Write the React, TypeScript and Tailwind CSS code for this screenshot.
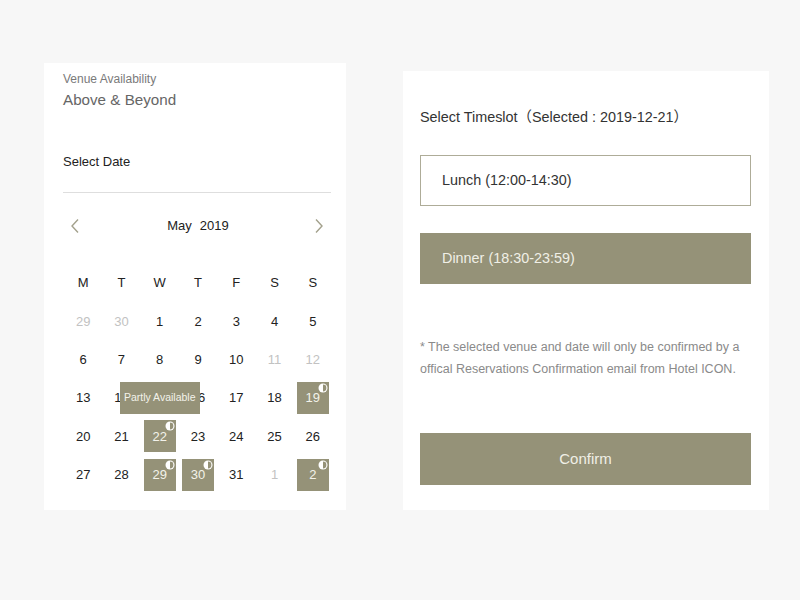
import React from 'react';

type Day = {
  n: number;
  muted?: boolean;
  partly?: boolean;
  tip?: boolean;
};

const weekdays = ['M', 'T', 'W', 'T', 'F', 'S', 'S'];

const weeks: Day[][] = [
  [{ n: 29, muted: true }, { n: 30, muted: true }, { n: 1 }, { n: 2 }, { n: 3 }, { n: 4 }, { n: 5 }],
  [{ n: 6 }, { n: 7 }, { n: 8 }, { n: 9 }, { n: 10 }, { n: 11, muted: true }, { n: 12, muted: true }],
  [{ n: 13 }, { n: 14 }, { n: 15, tip: true }, { n: 16 }, { n: 17 }, { n: 18 }, { n: 19, partly: true }],
  [{ n: 20 }, { n: 21 }, { n: 22, partly: true }, { n: 23 }, { n: 24 }, { n: 25 }, { n: 26 }],
  [{ n: 27 }, { n: 28 }, { n: 29, partly: true }, { n: 30, partly: true }, { n: 31 }, { n: 1, muted: true }, { n: 2, partly: true }],
];

function HalfMoon() {
  return (
    <svg viewBox="0 0 10 10" className="absolute top-[1px] right-[1px] w-[10px] h-[10px]">
      <circle cx="5" cy="5" r="4.5" fill="#ffffff" />
      <path d="M5 1.6 A3.4 3.4 0 0 1 5 8.4 Z" fill="#959278" />
    </svg>
  );
}

function Chevron({ dir }: { dir: 'left' | 'right' }) {
  return (
    <svg viewBox="0 0 10 16" className="w-[10px] h-[16px]">
      <polyline
        points={dir === 'left' ? '8,1.5 2,8 8,14.5' : '2,1.5 8,8 2,14.5'}
        fill="none"
        stroke="#a3a18c"
        strokeWidth="1.4"
      />
    </svg>
  );
}

function DayCell({ day }: { day: Day }) {
  return (
    <div className="relative h-[38.3px] flex items-center justify-center">
      {day.partly ? (
        <div className="relative w-[32px] h-[32px] bg-[#959278] flex items-center justify-center text-[#f3f2ea]">
          {day.n}
          <HalfMoon />
        </div>
      ) : (
        <span className={day.muted ? 'text-[#c2c2c2]' : 'text-[#222]'}>{day.n}</span>
      )}
      {day.tip && (
        <div className="absolute left-1/2 top-[3px] -translate-x-1/2 w-[80px] h-[32px] bg-[#959278] text-[#f3f2ea] text-[10.5px] flex items-center justify-center whitespace-nowrap z-10">
          Partly Available
        </div>
      )}
    </div>
  );
}

export default function App() {
  return (
    <div
      className="min-h-[600px] w-[800px] bg-[#f7f7f7] flex items-start pl-[44px] pt-[63px] gap-[57px]"
      style={{ fontFamily: '"Liberation Sans", Arial, "Noto Sans CJK SC", sans-serif' }}
    >
      {/* venue + calendar */}
      <div className="w-[302px] h-[447px] bg-white pl-[19px] pr-[15px] pt-[8px]">
        <p className="text-[12px] leading-[16px] text-[#7a7a7a]">Venue Availability</p>
        <h1 className="mt-[2px] text-[15.2px] leading-[22px] text-[#666]">Above &amp; Beyond</h1>
        <p className="mt-[42px] text-[13px] leading-[18px] text-[#222]">Select Date</p>
        <div className="mt-[21px] border-t border-[#dedede]" />

        <div className="mt-[21px] h-[24px] flex items-center justify-between px-[7px]">
          <Chevron dir="left" />
          <div className="flex gap-[8px] text-[13px] text-[#222] pl-[2px]">
            <span>May</span>
            <span>2019</span>
          </div>
          <Chevron dir="right" />
        </div>

        <div className="mt-[26px] ml-[1px] -mr-[1px] grid grid-cols-7 text-[13px]">
          {weekdays.map((w, i) => (
            <div key={i} className="h-[38.3px] flex items-center justify-center text-[#222]">
              {w}
            </div>
          ))}
          {weeks.flat().map((d, i) => (
            <DayCell key={i} day={d} />
          ))}
        </div>
      </div>

      {/* timeslot picker */}
      <div className="mt-[8px] w-[366px] h-[439px] bg-white pl-[17px] pr-[18px] pt-[36px]">
        <p className="text-[14.4px] leading-[20px] text-[#333]">Select Timeslot（Selected : 2019-12-21）</p>

        <button className="mt-[28px] w-full h-[51px] border border-[#aeac98] bg-white text-left pl-[21px] text-[14.4px] text-[#333]">
          Lunch (12:00-14:30)
        </button>
        <button className="mt-[27px] w-full h-[51px] bg-[#959278] text-left pl-[22px] text-[14.4px] text-[#f0efe6]">
          Dinner (18:30-23:59)
        </button>

        <p className="mt-[52px] text-[12.5px] leading-[22px] text-[#8a8a8a]">
          * The selected venue and date will only be confirmed by a
          <br />
          offical Reservations Confirmation email from Hotel ICON.
        </p>

        <button className="mt-[53px] w-full h-[52px] bg-[#959278] text-[15px] text-[#f0efe6]">Confirm</button>
      </div>
    </div>
  );
}
